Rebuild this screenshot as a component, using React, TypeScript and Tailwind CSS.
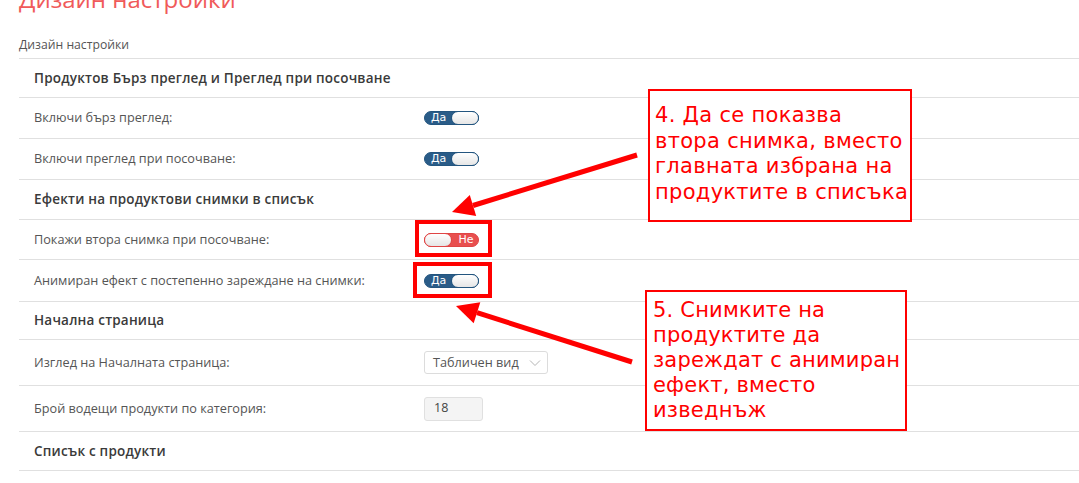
import React from "react";

function Toggle({ on }: { on: boolean }) {
  if (on) {
    return (
      <div className="flex h-[14px] w-[55px] items-center rounded-full border border-[#23557f] bg-[#2a5c88]">
        <span className="w-[26px] pl-[6px] text-[11px] leading-[12px] text-white font-['DejaVu_Sans',sans-serif]">Да</span>
        <span className="h-[14px] w-[29px] -mr-px rounded-full border border-[#23557f] bg-gradient-to-b from-white to-[#e6e6e6]" />
      </div>
    );
  }
  return (
    <div className="flex h-[14px] w-[55px] items-center rounded-full border border-[#e04545] bg-[#e84f4f]">
      <span className="h-[14px] w-[29px] -ml-px rounded-full border border-[#e04545] bg-gradient-to-b from-white to-[#e6e6e6]" />
      <span className="w-[26px] pl-[6px] text-[11px] leading-[12px] text-white font-['DejaVu_Sans',sans-serif]">Не</span>
    </div>
  );
}

function Header({ text, h }: { text: string; h: string }) {
  return (
    <div className={`flex items-center border-b border-[#e0e0e0] pl-[15px] ${h}`}>
      <span className="text-[13.5px] font-semibold text-[#3a3a3a] tracking-[0.2px]">{text}</span>
    </div>
  );
}

function Row({ label, h, children }: { label: string; h: string; children: React.ReactNode }) {
  return (
    <div className={`flex items-center border-b border-[#e0e0e0] pl-[15px] ${h}`}>
      <span className="w-[390px] text-[12.7px] text-[#555]">{label}</span>
      {children}
    </div>
  );
}

export default function App() {
  return (
    <div className="relative h-[483px] w-[1079px] overflow-hidden bg-white font-['Open_Sans',sans-serif]">
      <div className="pl-[19px]">
        <div className="-mt-[16px] h-[29px] text-[24px] leading-[29px] text-[#f05a5a]">Дизайн настройки</div>
        <div className="border-b border-[#e0e0e0] pt-[19px] text-[12.2px] leading-[26px] text-[#555] h-[46px]">Дизайн настройки</div>
        <Header text="Продуктов Бърз преглед и Преглед при посочване" h="h-[39px]" />
        <Row label="Включи бърз преглед:" h="h-[41px]"><Toggle on /></Row>
        <Row label="Включи преглед при посочване:" h="h-[41px]"><Toggle on /></Row>
        <Header text="Ефекти на продуктови снимки в списък" h="h-[40px]" />
        <Row label="Покажи втора снимка при посочване:" h="h-[40px]"><Toggle on={false} /></Row>
        <Row label="Анимиран ефект с постепенно зареждане на снимки:" h="h-[42px]"><Toggle on /></Row>
        <Header text="Начална страница" h="h-[38px]" />
        <Row label="Изглед на Началната страница:" h="h-[46px]">
          <div className="flex h-[23px] w-[124px] items-center justify-between rounded-[3px] border border-[#dcdcdc] bg-white pl-[8px] pr-[6px]">
            <span className="text-[12.7px] text-[#555]">Табличен вид</span>
            <svg width="12" height="8" viewBox="0 0 12 8"><polyline points="1,1.5 6,6.5 11,1.5" fill="none" stroke="#b5b5b5" strokeWidth="1" /></svg>
          </div>
        </Row>
        <Row label="Брой водещи продукти по категория:" h="h-[46px]">
          <div className="flex h-[24px] w-[59px] items-center rounded-[3px] border border-[#e0e0e0] bg-[#f4f4f4] pl-[9px] text-[12.5px] text-[#444]">18</div>
        </Row>
        <Header text="Списък с продукти" h="h-[39px]" />
      </div>

      {/* annotations */}
      <div className="absolute left-[415px] top-[220px] h-[37px] w-[77px] border-4 border-[#ff0000]" />
      <div className="absolute left-[413px] top-[262px] h-[36px] w-[79px] border-4 border-[#ff0000]" />

      <div className="absolute left-[648px] top-[89px] h-[133px] w-[264px] border-2 border-[#ff0000] bg-white pl-[5px] pt-[12px] font-['DejaVu_Sans',sans-serif] text-[21px] leading-[25.7px] tracking-[0.3px] text-[#ff0000] whitespace-nowrap">
        4. Да се показва<br />втора снимка, вместо<br />главната избрана на<br />продуктите в списъка
      </div>
      <div className="absolute left-[645px] top-[290px] h-[141px] w-[262px] border-2 border-[#ff0000] bg-white pl-[6px] pt-[6px] font-['DejaVu_Sans',sans-serif] text-[21px] leading-[25px] tracking-[0.2px] text-[#ff0000] whitespace-nowrap">
        5. Снимките на<br />продуктите да<br />зареждат с анимиран<br />ефект, вместо<br />изведнъж
      </div>

      <svg className="pointer-events-none absolute left-0 top-0" width="1079" height="483">
        <line x1="637" y1="155" x2="473" y2="205.5" stroke="#ff0000" strokeWidth="5" />
        <polygon points="452,212 476.2,216 469.8,195" fill="#ff0000" />
        <line x1="632" y1="362" x2="477" y2="312.7" stroke="#ff0000" strokeWidth="5" />
        <polygon points="456,306 480.3,302.2 473.7,323.2" fill="#ff0000" />
      </svg>
    </div>
  );
}
